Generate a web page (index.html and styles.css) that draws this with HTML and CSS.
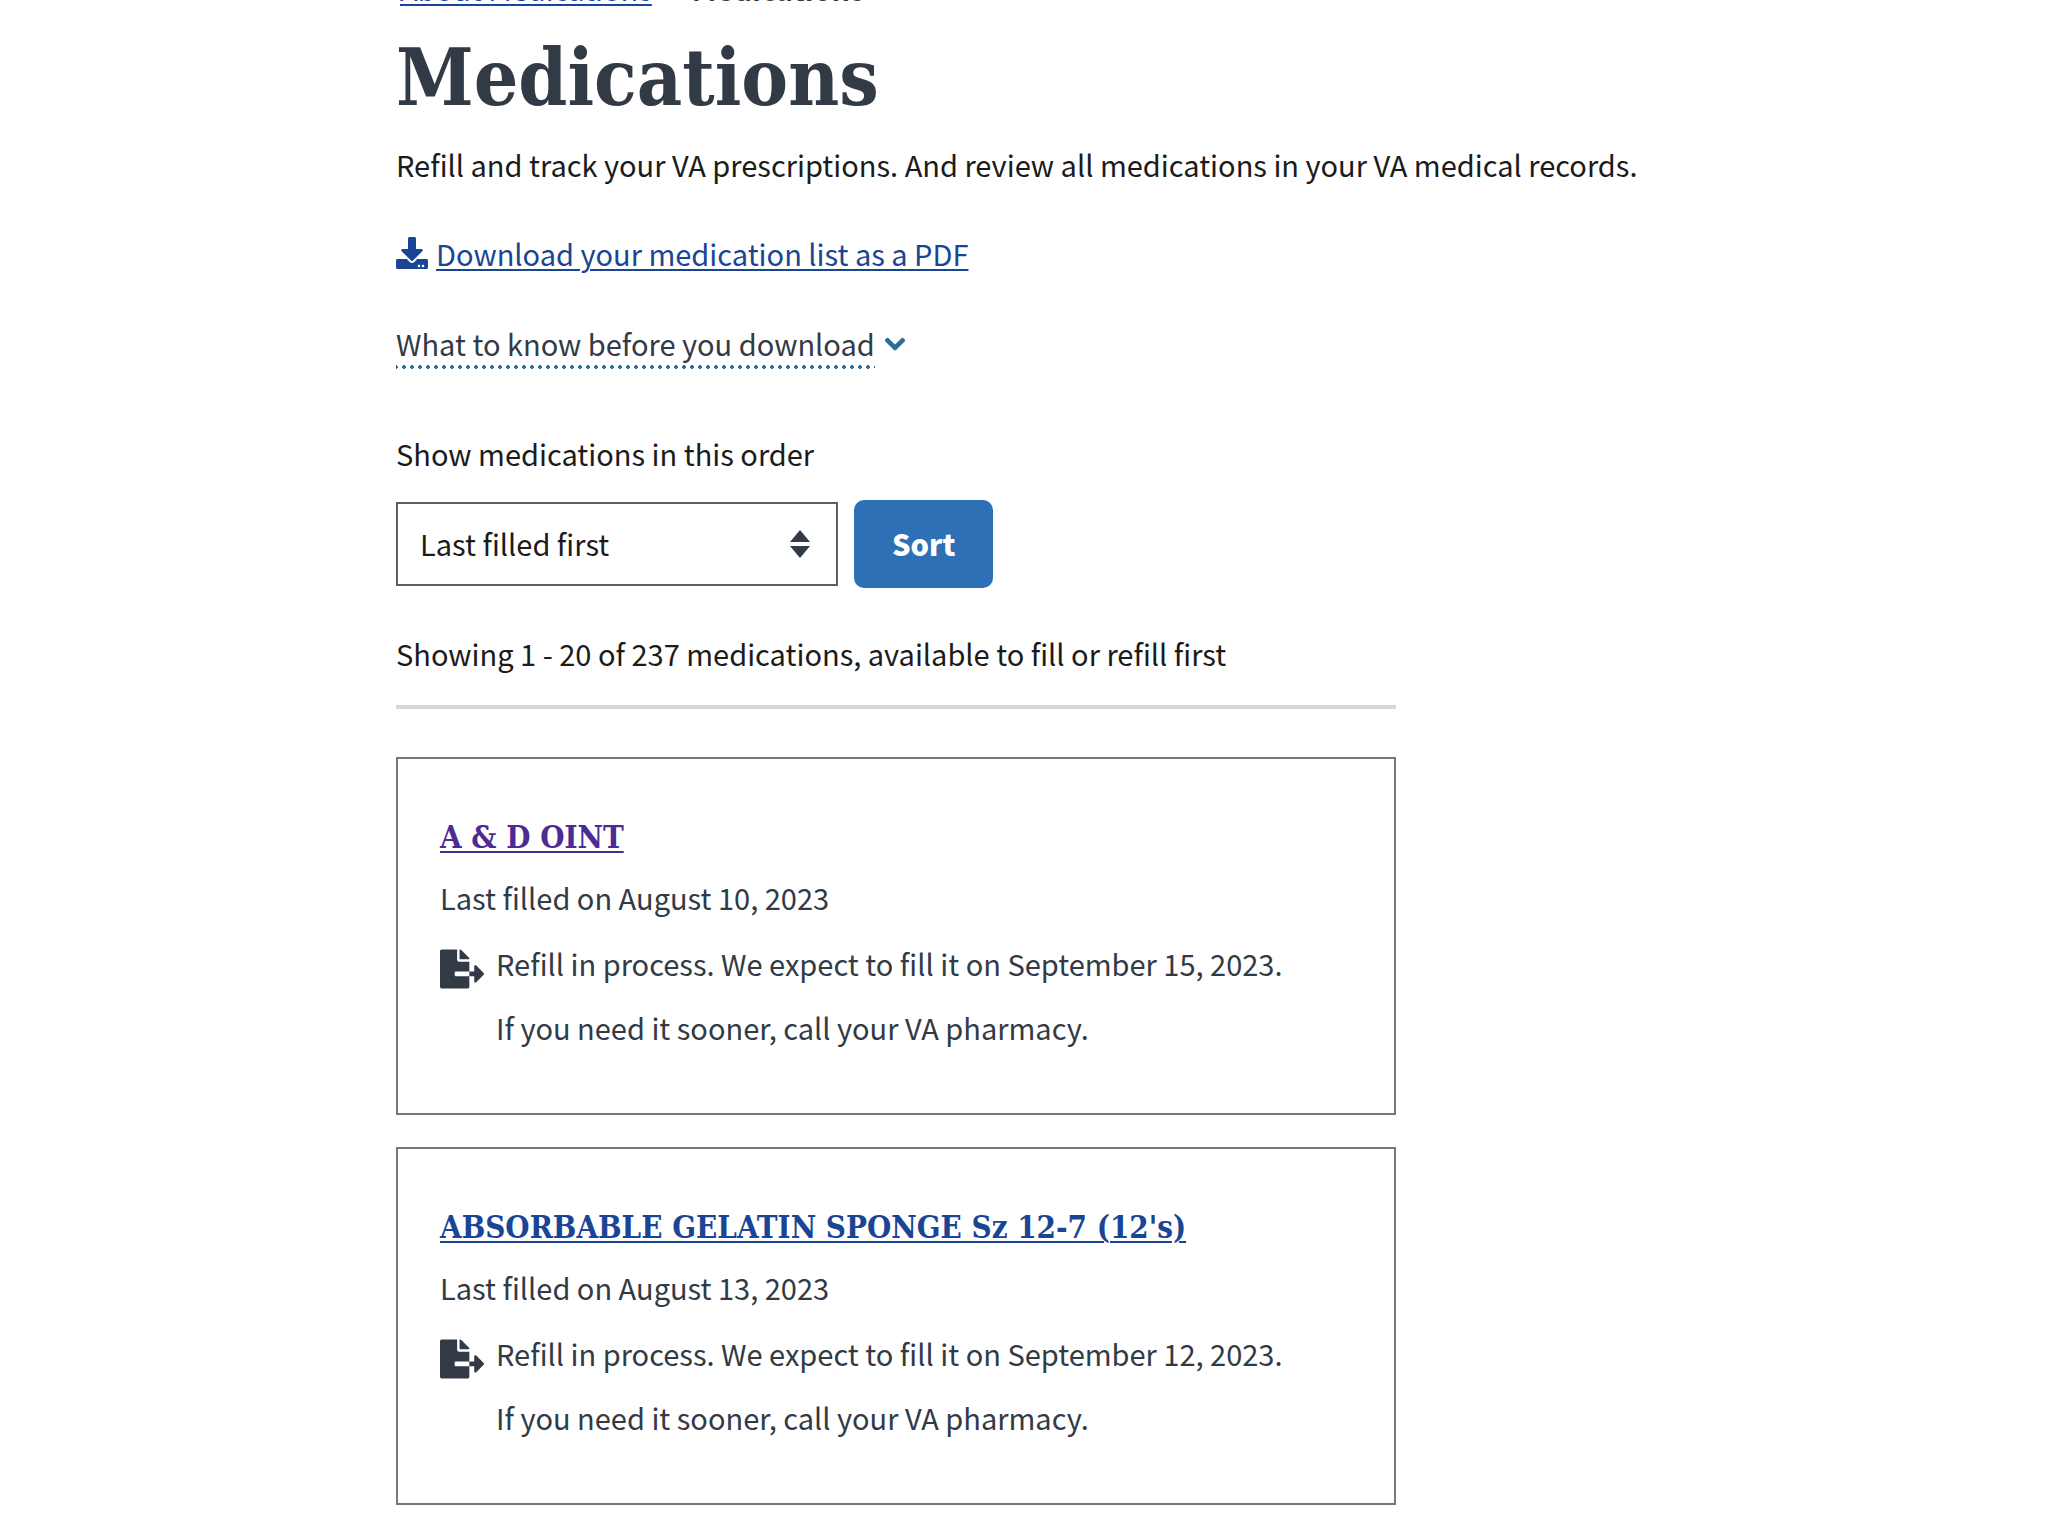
FILE: index.html
```html
<!DOCTYPE html>
<html lang="en">
<head>
<meta charset="utf-8">
<title>Medications</title>
<link rel="stylesheet" href="styles.css">
</head>
<body>
<svg class="sprite" aria-hidden="true">
  <symbol id="file-export" viewBox="0 0 576 512"><path d="M384 121.900c0-6.300-2.500-12.400-7-16.900L279.100 7c-4.500-4.500-10.600-7-17-7H256v128h128zM571 308l-95.700-96.400c-10.100-10.100-27.400-3-27.400 11.300V288h-64v64h64v65.200c0 14.300 17.300 21.400 27.400 11.300L571 332c6.600-6.600 6.600-17.400 0-24zm-379 28v-32c0-8.800 7.200-16 16-16h176V160H248c-13.200 0-24-10.800-24-24V0H24C10.700 0 0 10.700 0 24v464c0 13.300 10.700 24 24 24h336c13.300 0 24-10.700 24-24V352H208c-8.800 0-16-7.200-16-16z"/></symbol>
</svg>
<div class="page">
  <nav class="breadcrumbs" aria-label="Breadcrumb">
    <a href="#about">About Medications</a>
    <b>Medications</b>
  </nav>
  <main>
    <h1>Medications</h1>
    <p class="intro">Refill and track your VA prescriptions. And review all medications in your VA medical records.</p>
    <a class="download" href="#pdf">
      <svg class="download-icon" viewBox="0 0 512 512" aria-hidden="true"><path d="M216 0h80c13.300 0 24 10.700 24 24v168h87.700c17.800 0 26.700 21.500 14.100 34.100L269.700 378.300c-7.500 7.500-19.800 7.500-27.300 0L90.100 226.100c-12.600-12.600-3.700-34.100 14.100-34.100H192V24c0-13.300 10.700-24 24-24zm296 376v112c0 13.300-10.700 24-24 24H24c-13.300 0-24-10.700-24-24V376c0-13.300 10.700-24 24-24h146.700l49 49c20.100 20.100 52.500 20.100 72.600 0l49-49H488c13.300 0 24 10.700 24 24zm-124 88c0-11-9-20-20-20s-20 9-20 20 9 20 20 20 20-9 20-20zm64 0c0-11-9-20-20-20s-20 9-20 20 9 20 20 20 20-9 20-20z"/></svg>
      <span class="download-text">Download your medication list as a PDF</span>
    </a>
    <button class="info" type="button" aria-expanded="false">
      <span class="info-text">What to know before you download</span>
      <svg class="info-icon" viewBox="0 0 448 320" aria-hidden="true"><path d="M207 313L13 118c-10-9-10-25 0-34l22-23c10-9 25-9 34 0l155 154L379 61c9-9 24-9 34 0l22 23c10 9 10 25 0 34L241 313c-9 9-25 9-34 0z" stroke="currentColor" stroke-width="24"/></svg>
    </button>
    <form class="sort-form">
      <label for="order">Show medications in this order</label>
      <div class="sort-row">
        <div class="select-wrap">
          <select id="order"><option>Last filled first</option></select>
          <svg class="select-icon" viewBox="0 0 20 28" aria-hidden="true"><path d="M10 0l10 12H0zM10 28L0 16h20z"/></svg>
        </div>
        <button class="sort-button" type="button">Sort</button>
      </div>
    </form>
    <div class="results">
      <p class="count">Showing 1 - 20 of 237 medications, available to fill or refill first</p>
      <article class="card">
        <h2><a class="visited" href="#a-d-oint">A &amp; D OINT</a></h2>
        <p class="filled">Last filled on August 10, 2023</p>
        <div class="status">
          <svg class="status-icon" aria-hidden="true"><use href="#file-export"/></svg>
          <div class="status-text">
            <p>Refill in process. We expect to fill it on September 15, 2023.</p>
            <p>If you need it sooner, call your VA pharmacy.</p>
          </div>
        </div>
      </article>
      <article class="card">
        <h2><a href="#gelatin-sponge">ABSORBABLE GELATIN SPONGE Sz 12-7 (12's)</a></h2>
        <p class="filled">Last filled on August 13, 2023</p>
        <div class="status">
          <svg class="status-icon" aria-hidden="true"><use href="#file-export"/></svg>
          <div class="status-text">
            <p>Refill in process. We expect to fill it on September 12, 2023.</p>
            <p>If you need it sooner, call your VA pharmacy.</p>
          </div>
        </div>
      </article>
    </div>
  </main>
</div>
</body>
</html>
```

FILE: styles.css
```css
* { box-sizing: border-box; }
body {
  margin: 0;
  background: #fff;
  color: #1b1b1b;
  font: 29px/52px "Noto Sans CJK SC", "Noto Sans", sans-serif;
}
h1, h2, p { margin: 0; }
h1, h2 { font-family: "DejaVu Serif Condensed", "DejaVu Serif", serif; font-weight: 700; }
a { color: #1a4594; text-decoration-thickness: 2px; text-underline-offset: 3px; }
button, select { font: inherit; }
.sprite { display: none; }
.page { max-width: 1280px; margin: 0 auto; }
.breadcrumbs {
  display: flex;
  gap: 40px;
  margin-top: -38px;
  padding-left: 4px;
  color: #323a45;
}
.breadcrumbs b { font-weight: 700; }
main { display: flex; flex-direction: column; align-items: flex-start; padding-top: 24px; }
h1 { margin-bottom: 20px; color: #323a45; font-size: 78px; line-height: 80px; }
.download {
  display: flex;
  align-items: center;
  gap: 8px;
  margin-top: 37px;
  text-decoration: none;
}
.download-text { text-decoration: underline 2px; text-underline-offset: 3px; }
.download-icon { width: 32px; height: 32px; fill: currentColor; }
.info {
  display: flex;
  align-items: center;
  gap: 10px;
  margin-top: 38px;
  padding: 0;
  border: 0;
  background: none;
  color: #323a45;
  cursor: pointer;
}
.info-text {
  background: radial-gradient(circle, #2a6e98 2px, transparent 2px) 4px 100% / 8px 4px repeat-x;
}
.info-icon { width: 20px; height: 14px; overflow: visible; color: #2a6e98; fill: currentColor; }
.sort-form { margin-top: 58px; }
.sort-form label { display: block; }
.sort-row { display: flex; align-items: center; gap: 16px; margin-top: 21px; }
.select-wrap { position: relative; }
.select-wrap select {
  width: 442px;
  height: 84px;
  padding: 0 22px 2px;
  border: 2px solid #5b616b;
  border-radius: 0;
  background: #fff;
  color: #1b1b1b;
  appearance: none;
}
.select-icon {
  position: absolute;
  top: 28px;
  right: 28px;
  width: 20px;
  height: 28px;
  fill: #323a45;
  pointer-events: none;
}
.sort-button {
  padding: 17px 38px 19px;
  border: 0;
  border-radius: 10px;
  background: #2e70b5;
  color: #fff;
  font-weight: 900;
  cursor: pointer;
}
.results { width: 100%; max-width: 1000px; margin-top: 39px; }
.count { margin-bottom: 48px; padding-bottom: 26px; border-bottom: 4px solid #d6d7d9; }
.card {
  margin-bottom: 32px;
  padding: 58px 42px 60px;
  border: 2px solid #757779;
  color: #323a45;
}
h2 { font-size: 31px; line-height: 40px; }
.visited { color: #4c2c92; }
.filled { margin: 14px 0; }
.status { display: flex; gap: 12px; }
.status-icon { flex: none; width: 44px; height: 40px; margin-top: 12px; fill: currentColor; }
.status-text { display: grid; gap: 12px; }
```
